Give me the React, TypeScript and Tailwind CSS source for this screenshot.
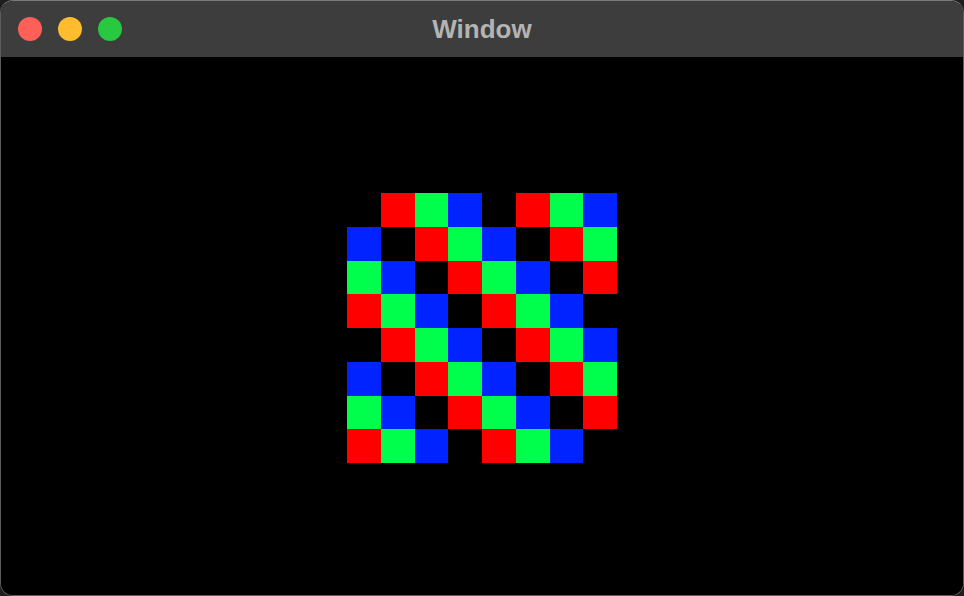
import React from 'react';

const COLORS = ['bg-black', 'bg-[#fe0000]', 'bg-[#00fe4c]', 'bg-[#0023ff]'];

const cells = Array.from({ length: 64 }, (_, i) => {
  const row = Math.floor(i / 8);
  const col = i % 8;
  return COLORS[(((col - row) % 4) + 4) % 4];
});

export default function App() {
  return (
    <div className="w-[964px] h-[596px] bg-[#1e1e1e]" style={{ fontFamily: '"Liberation Sans", Arial, sans-serif' }}>
      <div className="w-full h-full rounded-[13px] border border-[#5c5c5c] border-t-[#7a7a7a] overflow-hidden flex flex-col bg-black">
        {/* Title bar */}
        <div className="relative h-[56px] shrink-0 bg-[#3c3d3c] flex items-center pl-[17px] gap-[16px]">
          <span className="w-[24px] h-[24px] rounded-full bg-[#fe5f57]" />
          <span className="w-[24px] h-[24px] rounded-full bg-[#febc2e]" />
          <span className="w-[24px] h-[24px] rounded-full bg-[#28c840]" />
          <div className="absolute inset-0 flex items-center justify-center pointer-events-none">
            <span className="text-[26px] font-bold text-[#b4b4b4] leading-none">Window</span>
          </div>
        </div>

        {/* Content */}
        <div className="flex-1 bg-black flex items-center justify-center pt-[4px]">
          <div className="grid grid-cols-8 grid-rows-8 w-[270px] h-[270px]">
            {cells.map((c, i) => (
              <div key={i} className={c} />
            ))}
          </div>
        </div>
      </div>
    </div>
  );
}
